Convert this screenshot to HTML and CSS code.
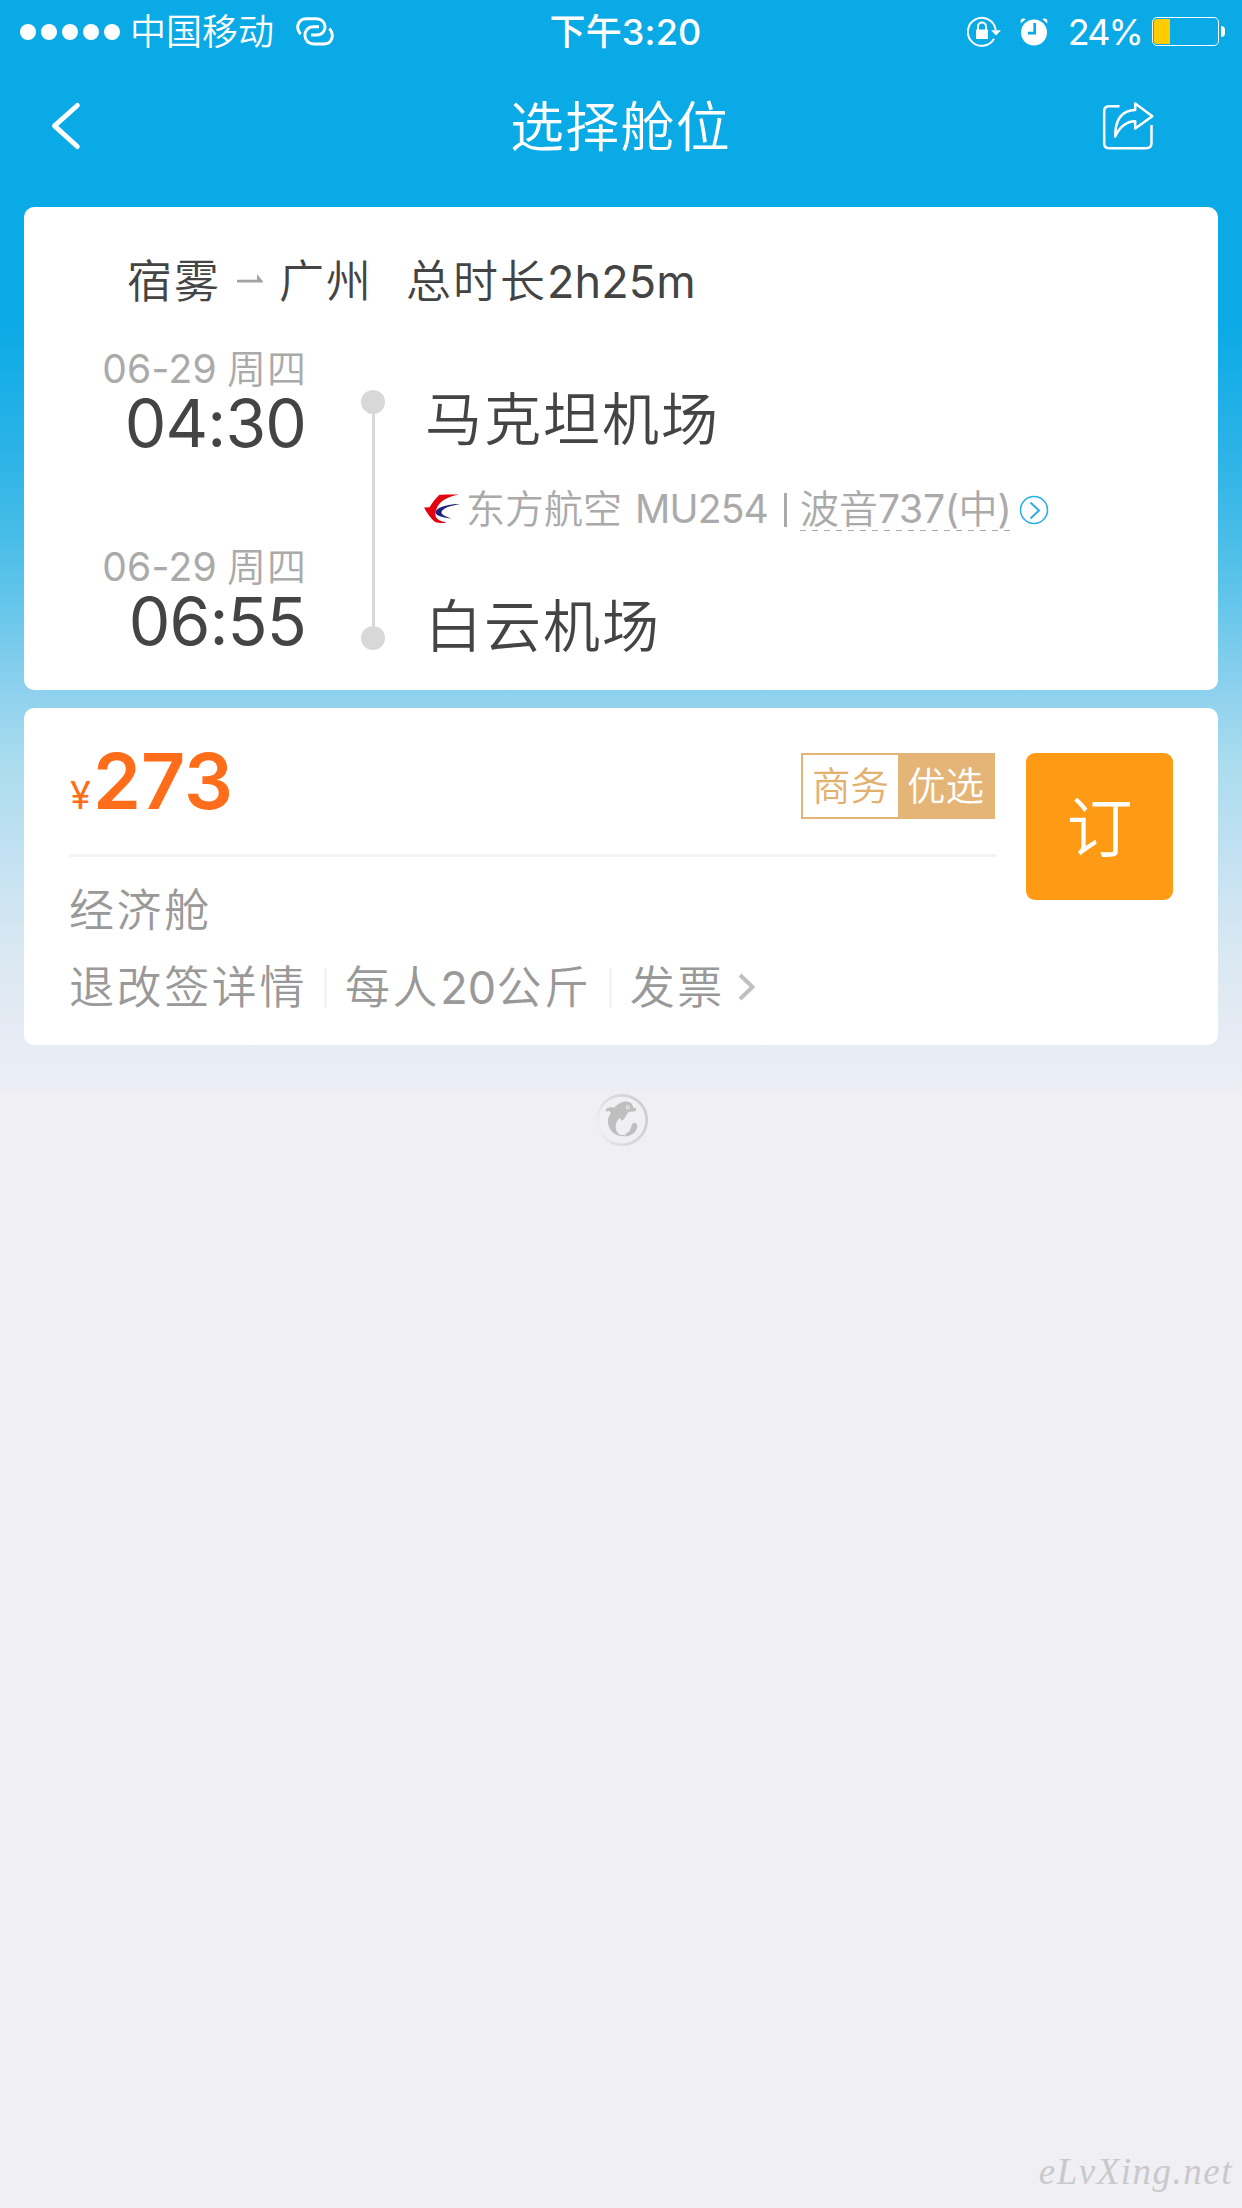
FILE: index.html
```html
<!DOCTYPE html>
<html lang="zh-CN">
<head>
<meta charset="utf-8">
<title>选择舱位</title>
<link rel="stylesheet" href="styles.css">
</head>
<body>
<div class="screen">
  <header class="status">
    <div class="status-left">
      <div class="signal"><i></i><i></i><i></i><i></i><i></i></div>
      <span class="carrier">中国移动</span>
      <svg class="link-icon" width="38" height="30" viewBox="0 0 38 30" fill="none" stroke="#fff" stroke-width="2.9">
        <path d="M4.600 17.200C-1 11 2 2 10 1.700H20C32 1.700 32 18 20.500 18H15M33.400 11.400C39 17.500 36 26.800 28 27H18C6 27 6 9.800 17.500 9.800H23"/>
      </svg>
    </div>
    <span class="clock">下午3:20</span>
    <div class="status-right">
      <svg class="lock-icon" width="34" height="31" viewBox="0 0 34 31">
        <path d="M27 22.700A14 14 0 1 1 28.700 14" fill="none" stroke="#fff" stroke-width="2"/>
        <path d="M24 14.300H34L29 19.500Z" fill="#fff"/>
        <rect x="9" y="13.500" width="12" height="9.500" rx=".8" fill="#fff"/>
        <path d="M11 14V10.500a4 4 0 0 1 8 0V14" fill="none" stroke="#fff" stroke-width="2"/>
      </svg>
      <svg class="alarm-icon" width="28" height="28" viewBox="0 0 28 28">
        <circle cx="14" cy="14.500" r="13" fill="#fff"/>
        <path d="M.7 5.500V2Q2.500-.3 5.800 1.100ZM27.300 5.500V2Q25.500-.3 22.200 1.100Z" fill="#fff"/>
        <path d="M14.700 5V15.200H8" fill="none" stroke="#0aaae6" stroke-width="2.700"/>
      </svg>
      <span class="percent">24%</span>
      <div class="battery"><i></i></div>
      <i class="battery-tip"></i>
    </div>
  </header>
  <nav class="navbar">
    <svg width="32" height="50" viewBox="0 0 32 50" fill="none" stroke="#fff" stroke-width="5" stroke-linecap="round" stroke-linejoin="round"><path d="M27.300 4.500L4.500 24.800L27.300 45.500"/></svg>
    <h1>选择舱位</h1>
    <svg width="52" height="50" viewBox="0 0 52 50" fill="none" stroke="#fff" stroke-width="2.500" stroke-linejoin="round">
      <path d="M17.500 5.200H7Q2.200 5.200 2.200 10V42.500Q2.200 47.200 7 47.200H44Q49.500 47.200 49.500 42V24"/>
      <path d="M33.200 2.500L50.300 15.200L33.200 27.500V20.200Q20 20.500 13.200 35.500Q13.200 9.500 33.200 9Z"/>
    </svg>
  </nav>

  <main>
    <section class="card flight">
      <div class="route">
        <span>宿雾</span>
        <svg width="26" height="9" viewBox="0 0 26 9" fill="#a3a3a3"><path d="M0 5.800H20V0L26 7.500V8.500H0Z"/></svg>
        <span>广州</span>
        <span class="duration">总时长<span class="latin">2h25m</span></span>
      </div>
      <div class="legs">
        <div class="times">
          <div class="date"><span class="latin">06-29</span> 周四</div>
          <div class="time">04:30</div>
          <div class="date arrive"><span class="latin">06-29</span> 周四</div>
          <div class="time">06:55</div>
        </div>
        <div class="track"><i></i><b></b><i></i></div>
        <div class="places">
          <div class="airport">马克坦机场</div>
          <div class="info">
            <svg width="36" height="30" viewBox="0 0 36 30">
              <path d="M35 .5C30 .4 21 .3 15.500.8C12 4 8 9 5.500 13.200L0 13.600C2 17 7 26 12.500 28.600Q17 29.300 22.500 28.400C14 27 10 24 11.800 17C14 8 22 3 35 .5Z" fill="#e3000f"/>
              <path d="M36 10C27 9.500 12 13 11.500 18C11 22 20 24 27.500 24.500C20 22 16 20 18 17C20 13.500 29 11.300 36 10Z" fill="#20207f"/>
            </svg>
            <span class="airline">东方航空</span><span class="number">MU254</span><span class="bar"></span>
            <span class="plane">波音<span class="latin">737(</span>中<span class="latin">)</span></span>
            <svg class="more" width="30" height="30" viewBox="0 0 30 30" fill="none" stroke="#28afe8"><circle cx="15" cy="15" r="13.500" stroke-width="1.600"/><path d="M11.500 7.500L20 15.500L11.500 23.500" stroke-width="2"/></svg>
          </div>
          <div class="airport">白云机场</div>
        </div>
      </div>
    </section>

    <section class="card fare">
      <div class="fare-main">
        <div class="price-row">
          <div class="price"><span class="yen">¥</span>273</div>
          <div class="badge"><span>商务</span><span class="solid">优选</span></div>
        </div>
        <div class="cabin">经济舱</div>
        <div class="links">
          <span>退改签详情</span><i></i><span>每人<span class="latin">20</span>公斤</span><i></i><span>发票</span>
          <svg width="19" height="28" viewBox="0 0 19 28" fill="none" stroke="#c0c0c0" stroke-width="4"><path d="M2 2L14.500 14L2 26"/></svg>
        </div>
      </div>
      <button class="book">订</button>
    </section>
    <svg class="loader" width="56" height="56" viewBox="0 0 168 168">
      <defs><linearGradient id="ring" x1="0" x2="1" y1=".65" y2=".4"><stop offset="0" stop-color="#ccc" stop-opacity="0"/><stop offset=".5" stop-color="#dadada"/><stop offset="1" stop-color="#cecece"/></linearGradient></defs>
      <circle cx="84" cy="84" r="74" fill="none" stroke="url(#ring)" stroke-width="8"/>
      <path d="M36 59C32 51 45 43 60 47C76 31 99 21 114 36L118 47L126 49V56Q118 60 104 59C98 67 94 76 88 83L81 86Q80 80 79 78C66 84 61 104 69 119C75 128 80 131 87 128C105 124 110 113 113 100C117 88 129 91 130 101C129 119 114 133 92 133C58 134 40 109 42 84C43 75 47 69 51 64L45 56Z" fill="#bfbfbf"/>
      <path d="M75 91C68 113 77 127 96 129" fill="none" stroke="#efeff4" stroke-width="3"/>
      <circle cx="102" cy="46" r="6" fill="#efeff4"/><circle cx="103" cy="46" r="3" fill="#bbb"/>
    </svg>
  </main>
  <footer class="watermark">eLvXing.net</footer>
</div>
</body>
</html>
```
FILE: styles.css
```css
* { box-sizing: border-box; }
body {
  margin: 0;
  background: #efeff4;
  font-family: Inter, "Noto Sans CJK SC", sans-serif;
  font-weight: 350;
  color: #444;
}
svg { display: block; flex: none; }
i { font-style: normal; }
.latin { font-weight: 400; }
.screen {
  width: 1242px;
  height: 2208px;
  display: flex;
  flex-direction: column;
  overflow: hidden;
  white-space: nowrap;
  background: linear-gradient(#0aaae6 0, #0aaae6 320px, #2cb3e7 455px, #51c0e9 560px, #8ed1ee 690px, #abdcee 765px, #c6e2f2 870px, #d8e8f2 945px, #e2eaf2 1010px, #e8ecf5 1050px, #e9edf5 1077px, #efeff4 1095px);
}

/* status bar */
.status {
  height: 60px;
  display: grid;
  grid-template-columns: 1fr auto 1fr;
  align-items: center;
  padding: 2px 17px 0 20px;
  color: #fff;
}
.status-left, .status-right { display: flex; align-items: center; }
.status-right { justify-content: flex-end; }
.signal { display: flex; gap: 5px; margin-right: 10px; }
.signal i { width: 16px; height: 16px; border-radius: 50%; background: #fff; }
.carrier { font-size: 36px; line-height: 58px; padding-top: 1px; }
.link-icon { margin-left: 22px; }
.clock { font-size: 36px; line-height: 58px; font-weight: 500; padding: 1px 0 0 6px; letter-spacing: .2px; }
.lock-icon { margin-right: 19px; }
.alarm-icon { margin-right: 20px; }
.percent { font-size: 36px; line-height: 58px; font-weight: 400; margin-right: 10px; letter-spacing: -1.9px; }
.battery { width: 67px; height: 29px; border: 1px solid #fff; border-radius: 5px; padding: 1px; }
.battery i { display: block; width: 16px; height: 25px; background: #fc0; border-radius: 3px 0 0 3px; }
.battery-tip { width: 4px; height: 11px; margin-left: 2px; border-radius: 0 4px 4px 0; background: #fff; }

.navbar {
  height: 147px;
  padding: 0 88px 15px 50px;
  display: flex;
  align-items: center;
  justify-content: space-between;
  color: #fff;
}
.navbar h1 { margin: 4px 0 0 57px; font-size: 54px; line-height: 80px; font-weight: 350; letter-spacing: 1.2px; }

main { padding: 0 24px; display: flex; flex-direction: column; }
.card { background: #fff; border-radius: 10px; }

/* flight summary */
.flight { height: 483px; margin-bottom: 18px; }
.route {
  height: 143px;
  padding: 0 0 1px 103px;
  display: flex;
  align-items: center;
  font-size: 45px;
  letter-spacing: 2px;
}
.route svg { margin: 0 16px 0 16px; }
.route .duration { margin-left: 33px; }
.duration .latin { letter-spacing: .1px; }
.legs { display: flex; }
.times { width: 281px; display: flex; flex-direction: column; align-items: flex-end; }
.date { font-size: 39px; line-height: 37px; color: #aaa; letter-spacing: 1px; word-spacing: -2px; margin-right: -2px; }
.date .latin { letter-spacing: .3px; }
.arrive { margin-top: 89px; }
.time { font-size: 66px; line-height: 72px; letter-spacing: -.9px; margin-right: -1px; font-weight: 400; }
.track { width: 24px; margin: 40px 39px 0 56px; height: 260px; display: flex; flex-direction: column; align-items: center; }
.track i { width: 24px; height: 24px; border-radius: 50%; background: #d8d8d8; }
.track b { width: 3px; flex: 1; background: #d8d8d8; }
.places { padding-top: 34px; }
.airport { font-size: 57px; line-height: 72px; letter-spacing: 2px; padding-left: 1px; }
.info {
  height: 44px;
  margin: 31px 0 60px;
  display: flex;
  align-items: center;
  font-size: 39px;
  line-height: 44px;
  color: #aaa;
}
.airline { margin-left: 6px; }
.number { margin-left: 13px; letter-spacing: -.8px; font-weight: 400; }
.bar { width: 3px; height: 34px; margin: 2px 13px 0 16px; background: #aaa; }
.plane {
  background: repeating-linear-gradient(90deg, #aaa 0 6px, transparent 6px 12px) 0 100% / 100% 1.5px no-repeat;
}
.plane .latin { letter-spacing: -.3px; }
.more { margin-left: 7px; margin-top: 2px; }

/* fare */
.fare { height: 337px; padding: 0 45px; display: flex; justify-content: space-between; color: #999; }
.fare-main { width: 927px; }
.price-row { height: 149px; border-bottom: 3px solid #f3f3f3; display: flex; justify-content: space-between; }
.price { font-size: 77px; line-height: 146px; font-weight: 600; color: #ff6d1b; padding-left: 1px; }
.yen { font-size: 38px; font-weight: 400; margin-right: 2px; }
.badge { width: 194px; height: 66px; margin: 45px 1px 0 0; border: 2px solid #e5b577; display: flex; font-size: 38.5px; line-height: 63px; color: #e2b16f; }
.badge span { flex: 1; text-align: center; }
.badge .solid { background: #e5b577; color: #fff; }
.cabin { font-size: 45px; line-height: 60px; margin-top: 24px; letter-spacing: 2.6px; }
.links { display: flex; align-items: center; height: 60px; margin-top: 13px; font-size: 45px; letter-spacing: 2.6px; }
.links .latin { letter-spacing: .2px; }
.links i { width: 3px; height: 40px; background: #f3f3f3; margin: 7px 18px 0 17px; }
.links svg { margin: 5px 0 0 13px; }
.book { width: 147px; height: 147px; margin-top: 45px; padding: 3px 0 0; border: 0; border-radius: 9px; background: #ff9a14; color: #fff; font: inherit; font-size: 66px; line-height: 144px; }
.loader { margin: 47px 0 0 570px; }

.watermark {
  margin: auto 9px 12px auto;
  font-family: "Liberation Serif", serif;
  font-style: italic;
  font-size: 37px;
  line-height: 48px;
  letter-spacing: 1.5px;
  font-weight: 400;
  color: #c9c9cb;
}
```
